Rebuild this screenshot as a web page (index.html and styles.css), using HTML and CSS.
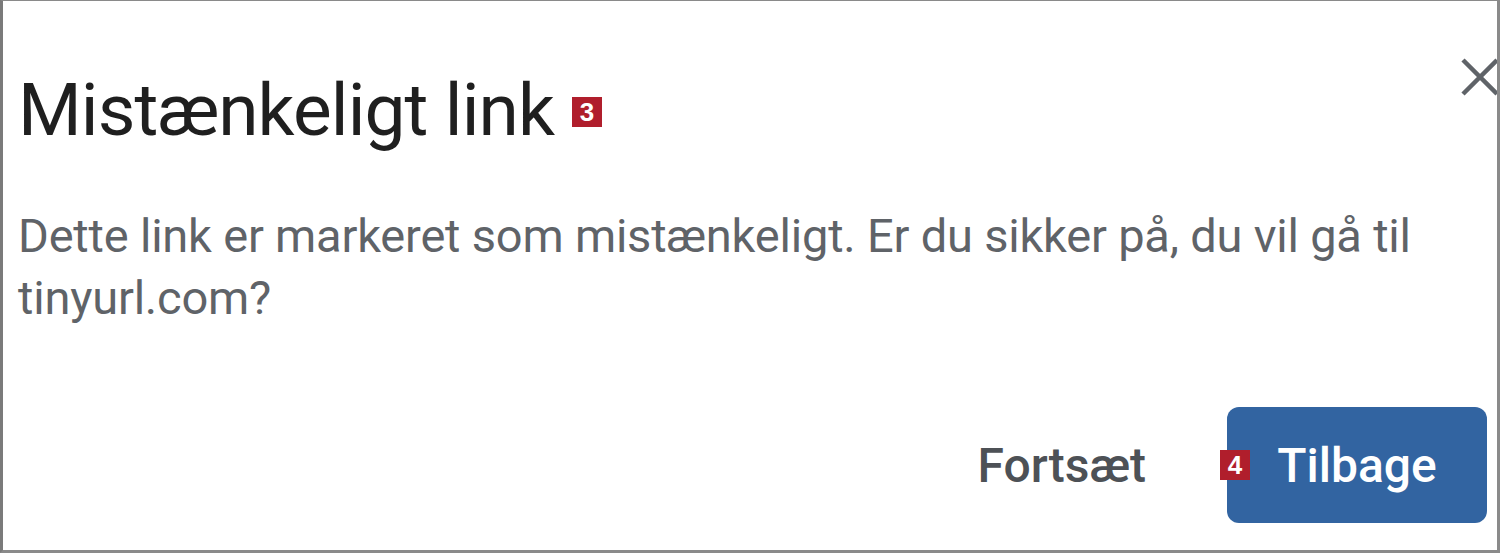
FILE: index.html
```html
<!DOCTYPE html>
<html lang="da">
<head>
<meta charset="utf-8">
<title>Mistænkeligt link</title>
<link rel="stylesheet" href="styles.css">
</head>
<body>
<div class="frame">
  <div class="dialog">
    <div class="header">
      <h1 class="title">Mistænkeligt link</h1>
      <span class="badge badge-title">3</span>
    </div>
    <button class="close" aria-label="Luk">
      <svg width="38" height="38" viewBox="0 0 38 38"><path d="M2 2 L36 36 M36 2 L2 36" stroke="#5f6368" stroke-width="4.5" fill="none"/></svg>
    </button>
    <p class="message">Dette link er markeret som mistænkeligt. Er du sikker på, du vil gå til tinyurl.com?</p>
    <div class="actions">
      <button class="btn btn-text">Fortsæt</button>
      <button class="btn btn-primary"><span class="badge badge-btn">4</span>Tilbage</button>
    </div>
  </div>
</div>
</body>
</html>
```
FILE: styles.css
```css
html, body {
  margin: 0;
  padding: 0;
  background: #ffffff;
}

.frame {
  width: 1500px;
  height: 553px;
  box-sizing: border-box;
  border-top: 1px solid #8a8a8a;
  border-left: 3px solid #7a7a7a;
  border-right: 3px solid #8a8a8a;
  border-bottom: 3px solid #8a8a8a;
  overflow: hidden;
  position: relative;
  background: #ffffff;
}

.dialog {
  padding: 65px 10px 0 15px;
  font-family: Roboto, "Noto Sans", Arial, sans-serif;
}

.header {
  display: flex;
  align-items: center;
  gap: 18px;
  height: 88px;
}

.title {
  margin: 0;
  font-size: 73px;
  line-height: 88px;
  font-weight: 400;
  color: #1f1f1f;
  letter-spacing: -0.9px;
}

.badge {
  display: inline-flex;
  align-items: center;
  justify-content: center;
  width: 30px;
  height: 30px;
  background: #b01e2c;
  color: #ffffff;
  font-family: "Liberation Sans", Arial, sans-serif;
  font-weight: 700;
  font-size: 26px;
  line-height: 1;
}

.badge-title {
  margin-top: 4px;
}

.close {
  position: absolute;
  top: 57px;
  right: -2px;
  width: 38px;
  height: 38px;
  padding: 0;
  border: 0;
  background: transparent;
}

.close svg {
  display: block;
}

.message {
  margin: 51px 0 0 0;
  max-width: 1440px;
  font-size: 47px;
  line-height: 62px;
  letter-spacing: -0.2px;
  color: #5f6368;
}

.actions {
  display: flex;
  justify-content: flex-end;
  align-items: center;
  gap: 57px;
  margin-top: 78px;
}

.btn {
  height: 116px;
  border: 0;
  font-family: Roboto, "Noto Sans", Arial, sans-serif;
  font-size: 48px;
  font-weight: 500;
  cursor: pointer;
}

.btn-text {
  background: transparent;
  color: #4d5156;
  padding: 0 24px;
}

.btn-primary {
  position: relative;
  width: 260px;
  background: #3264a1;
  color: #ffffff;
  border-radius: 12px;
  padding: 0;
}

.badge-btn {
  position: absolute;
  left: -7px;
  top: 43px;
}
```
